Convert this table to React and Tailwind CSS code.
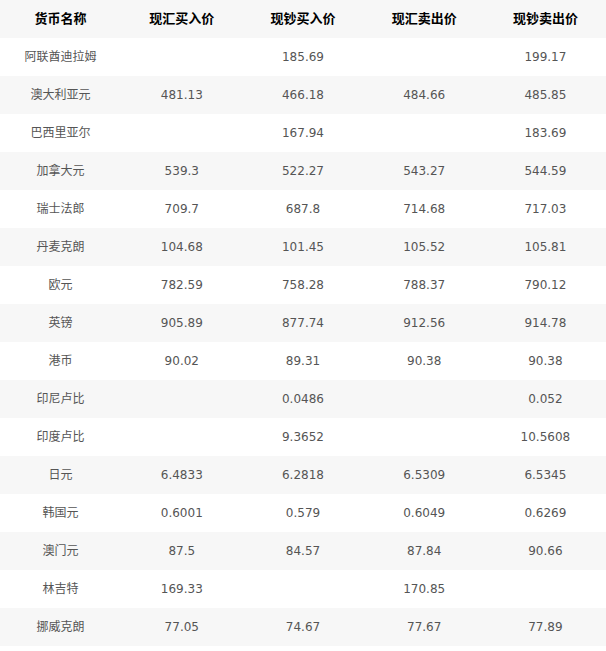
import React from "react";

const rows = [
  ["阿联酋迪拉姆", "", "185.69", "", "199.17"],
  ["澳大利亚元", "481.13", "466.18", "484.66", "485.85"],
  ["巴西里亚尔", "", "167.94", "", "183.69"],
  ["加拿大元", "539.3", "522.27", "543.27", "544.59"],
  ["瑞士法郎", "709.7", "687.8", "714.68", "717.03"],
  ["丹麦克朗", "104.68", "101.45", "105.52", "105.81"],
  ["欧元", "782.59", "758.28", "788.37", "790.12"],
  ["英镑", "905.89", "877.74", "912.56", "914.78"],
  ["港币", "90.02", "89.31", "90.38", "90.38"],
  ["印尼卢比", "", "0.0486", "", "0.052"],
  ["印度卢比", "", "9.3652", "", "10.5608"],
  ["日元", "6.4833", "6.2818", "6.5309", "6.5345"],
  ["韩国元", "0.6001", "0.579", "0.6049", "0.6269"],
  ["澳门元", "87.5", "84.57", "87.84", "90.66"],
  ["林吉特", "169.33", "", "170.85", ""],
  ["挪威克朗", "77.05", "74.67", "77.67", "77.89"],
];

const heads = ["货币名称", "现汇买入价", "现钞买入价", "现汇卖出价", "现钞卖出价"];

export default function App() {
  return (
    <div className="w-[606px] bg-white font-['DejaVu_Sans','Noto_Sans_CJK_SC',sans-serif]">
      <div className="grid grid-cols-5 h-[38px] items-center bg-[#f7f7f7] text-[13px] font-bold text-black">
        {heads.map((h) => (
          <div key={h} className="text-center">{h}</div>
        ))}
      </div>
      {rows.map((r, i) => (
        <div
          key={r[0]}
          className={
            "grid grid-cols-5 h-[38px] items-center text-[12px] text-[#555] " +
            (i % 2 === 0 ? "bg-white" : "bg-[#f7f7f7]")
          }
        >
          {r.map((c, j) => (
            <div key={j} className="text-center">{c}</div>
          ))}
        </div>
      ))}
    </div>
  );
}
